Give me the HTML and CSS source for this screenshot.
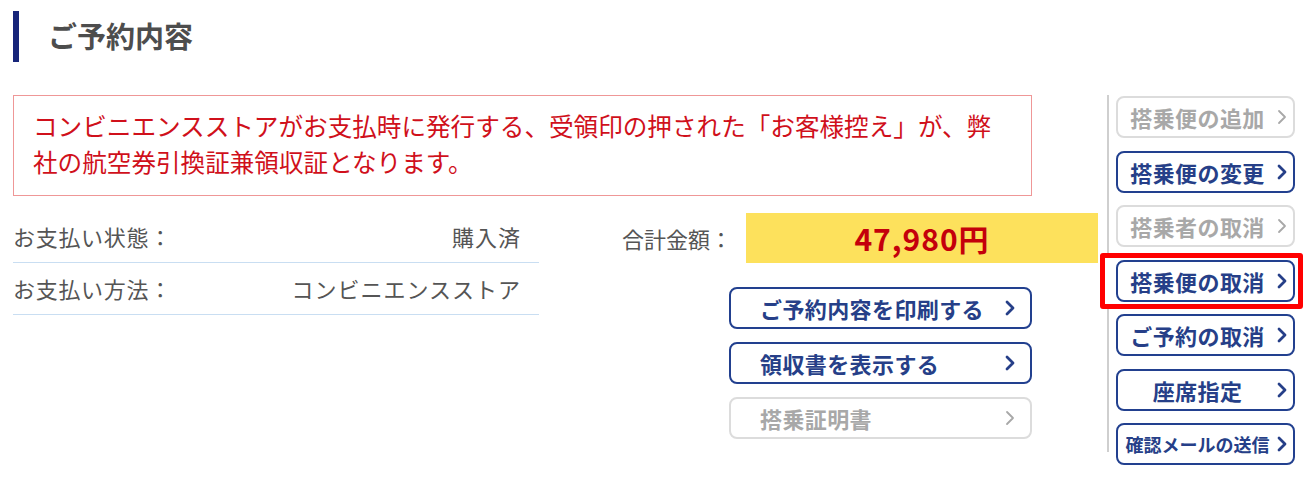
FILE: index.html
```html
<!DOCTYPE html>
<html lang="ja">
<head>
  <meta charset="UTF-8" />
  <title>ご予約内容</title>
  <link rel="stylesheet" href="styles.css">
</head>
<body>
  <h1 class="page-title">ご予約内容</h1>

  <div class="main">
    <div class="content">
      <p class="notice">コンビニエンスストアがお支払時に発行する、受領印の押された「お客様控え」が、弊社の航空券引換証兼領収証となります。</p>

      <div class="info">
        <dl class="pay-table">
          <div class="pay-row">
            <dt>お支払い状態：</dt>
            <dd>購入済</dd>
          </div>
          <div class="pay-row">
            <dt>お支払い方法：</dt>
            <dd>コンビニエンスストア</dd>
          </div>
        </dl>

        <div class="total">
          <div class="total-row">
            <span class="total-label">合計金額：</span>
            <span class="total-amount">47,980円</span>
          </div>
          <div class="actions">
            <a class="btn" href="#"><span class="btn-text">ご予約内容を印刷する</span><svg class="chev" viewBox="0 0 10 16"><polyline points="2,2 8,8 2,14"/></svg></a>
            <a class="btn" href="#"><span class="btn-text">領収書を表示する</span><svg class="chev" viewBox="0 0 10 16"><polyline points="2,2 8,8 2,14"/></svg></a>
            <span class="btn is-off"><span class="btn-text">搭乗証明書</span><svg class="chev" viewBox="0 0 10 16"><polyline points="2,2 8,8 2,14"/></svg></span>
          </div>
        </div>
      </div>
    </div>

    <div class="side">
      <div class="side-line"></div>
      <div class="side-list">
        <span class="side-btn is-off"><span class="btn-text">搭乗便の追加</span><svg class="chev" viewBox="0 0 10 16"><polyline points="2,2 8,8 2,14"/></svg></span>
        <a class="side-btn" href="#"><span class="btn-text">搭乗便の変更</span><svg class="chev" viewBox="0 0 10 16"><polyline points="2,2 8,8 2,14"/></svg></a>
        <span class="side-btn is-off"><span class="btn-text">搭乗者の取消</span><svg class="chev" viewBox="0 0 10 16"><polyline points="2,2 8,8 2,14"/></svg></span>
        <div class="marked">
          <a class="side-btn" href="#"><span class="btn-text">搭乗便の取消</span><svg class="chev" viewBox="0 0 10 16"><polyline points="2,2 8,8 2,14"/></svg></a>
        </div>
        <a class="side-btn" href="#"><span class="btn-text">ご予約の取消</span><svg class="chev" viewBox="0 0 10 16"><polyline points="2,2 8,8 2,14"/></svg></a>
        <a class="side-btn" href="#"><span class="btn-text">座席指定</span><svg class="chev" viewBox="0 0 10 16"><polyline points="2,2 8,8 2,14"/></svg></a>
        <a class="side-btn is-small" href="#"><span class="btn-text">確認メールの送信</span><svg class="chev" viewBox="0 0 10 16"><polyline points="2,2 8,8 2,14"/></svg></a>
      </div>
    </div>
  </div>
</body>
</html>
```

FILE: styles.css
```css
/* Base */
* {
  box-sizing: border-box;
}
body {
  margin: 0;
  background: #fff;
  color: #555;
  font-family: "Noto Sans CJK JP", "Noto Sans", sans-serif;
}

a {
  text-decoration: none;
}

/* Title */
.page-title {
  margin: 11px 0 0 13px;
  height: 51px;
  padding-left: 29px;
  border-left: 6px solid #17257a;
  font-size: 29px;
  line-height: 49px;
  font-weight: 700;
  color: #4d4d4d;
}

/* Layout */
.main {
  display: flex;
  margin-top: 33px;
  padding-left: 13px;
}

.content {
  width: 1085px;
}

.notice {
  margin: 0;
  width: 1019px;
  padding: 11px 19px 16px;
  border: 1px solid #ef9797;
  color: #d0101b;
  font-size: 24.6px;
  line-height: 36px;
}

.info {
  display: flex;
  margin-top: 15px;
}

/* Payment table */
.pay-table {
  margin: 0;
  width: 526px;
}

.pay-row {
  display: flex;
  justify-content: space-between;
  padding: 9px 18px 10px 0;
  border-bottom: 1px solid #c9def2;
  font-size: 22px;
  line-height: 32px;
  color: #555;
}

.pay-row dt,
.pay-row dd {
  margin: 0;
}

.pay-row dt {
  letter-spacing: 0.7px;
}

.pay-row dd {
  letter-spacing: 1px;
}

/* Total + actions */
.total {
  width: 476px;
  margin-left: auto;
}

.total-row {
  display: flex;
  align-items: center;
  margin-top: 2px;
  height: 50px;
}

.total-label {
  font-size: 22px;
  color: #555;
}

.total-amount {
  margin-left: auto;
  width: 352px;
  height: 50px;
  background: #fde15c;
  color: #c4000b;
  font-size: 30px;
  font-weight: 700;
  letter-spacing: 1px;
  line-height: 50px;
  text-align: center;
}

.actions {
  display: flex;
  flex-direction: column;
  gap: 13px;
  width: 303px;
  margin: 24px 0 0 107px;
}

.btn,
.side-btn {
  display: flex;
  align-items: center;
  height: 42px;
  background: #fff;
  border: 2px solid #22408f;
  border-radius: 8px;
  color: #263f88;
  font-size: 22px;
  font-weight: 700;
  letter-spacing: 0.4px;
}

.btn {
  padding: 0 15px 0 29px;
}

.btn-text {
  flex: 1;
  white-space: nowrap;
}

.chev {
  width: 10px;
  height: 16px;
  fill: none;
  stroke: currentColor;
  stroke-width: 2.8;
  stroke-linecap: round;
  stroke-linejoin: round;
}

.is-off {
  border-color: #dcdcdc;
  color: #a8a8a8;
}

.is-off .chev {
  stroke-width: 1.8;
}

/* Right column */
.side {
  display: flex;
  margin-left: 9px;
}

.side-line {
  width: 2px;
  height: 357px;
  background: #cfcfcf;
}

.side-list {
  display: flex;
  flex-direction: column;
  gap: 12.5px;
  width: 179px;
  margin-left: 7px;
  padding-top: 1px;
}

.side-btn {
  padding: 0 6px 0 0;
}

.side-btn .btn-text {
  text-align: center;
}

.side-btn.is-small {
  font-size: 18px;
  letter-spacing: 0;
}

.marked {
  margin: -7px -8px -7px -16px;
  padding: 2px 3px 2px 11px;
  border: 5px solid #f00;
  border-radius: 3px;
  background: #fff;
}
```
